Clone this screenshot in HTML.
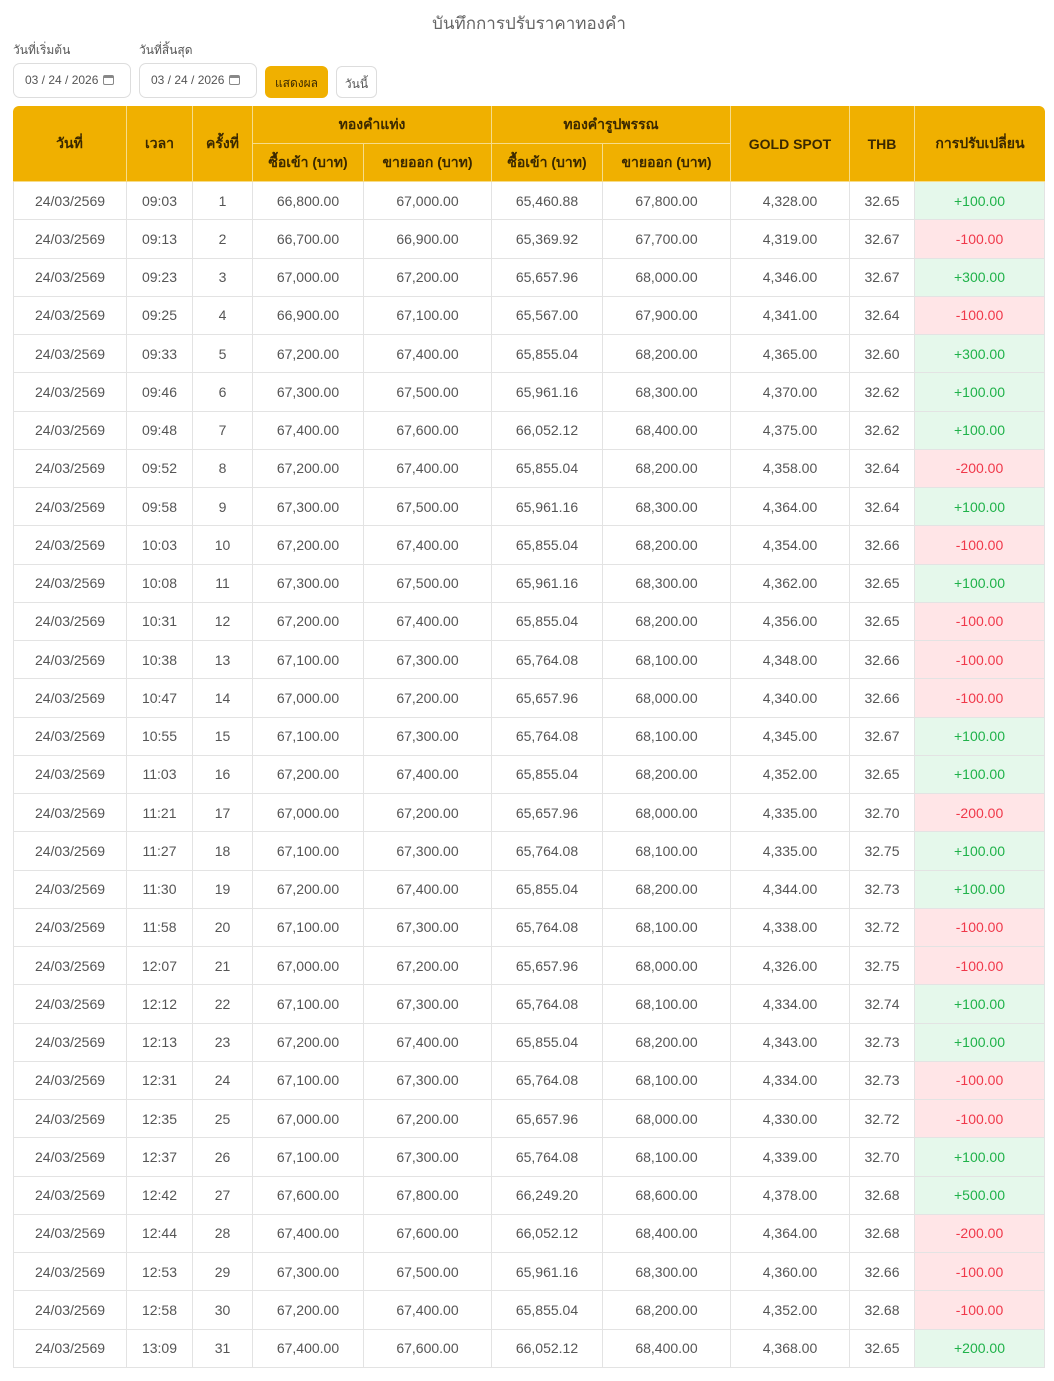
<!DOCTYPE html>
<html><head><meta charset="utf-8"><style>
*{box-sizing:border-box;margin:0;padding:0}
body{width:1054px;height:1381px;background:#fff;font-family:"Liberation Sans","Noto Sans CJK SC",sans-serif;color:#555;overflow:hidden;position:relative}
.title{position:absolute;top:10px;left:0;width:1058px;text-align:center;font-size:17px;color:#666}
.lbl{position:absolute;top:41px;font-size:12px;color:#555}
.inp{position:absolute;top:63px;height:35px;width:118px;border:1px solid #ddd;border-radius:7px;font-size:12px;color:#555;padding:9px 0 0 11px}
.cal{display:inline-block;width:11px;height:10px;border:1.5px solid #888;border-top-width:3px;border-radius:2px;margin-left:5px;vertical-align:-1px}
.btn{position:absolute;top:66px;height:32px;border-radius:6px;font-size:12px;padding-top:8px;text-align:center}
table{position:absolute;left:13px;top:106px;width:1032px;border-collapse:separate;border-spacing:0;font-size:14px}
th{background:#f0b000;color:#3a2800;font-weight:bold;border-right:1px solid #f6dc8a;border-bottom:1px solid #f6dc8a;font-size:14px}
th.r1{height:38px}th.r2{height:38px}
td{height:38.26px;text-align:center;border-right:1px solid #e3e3e3;border-bottom:1px solid #e3e3e3;color:#555}
td:first-child{border-left:1px solid #e3e3e3}
td:last-child{border-right:1px solid #e3e3e3}
.g{background:#e5f8eb;color:#1fb24a}.r{background:#ffe5e7;color:#f0384a}
</style></head><body>
<div class="title">บันทึกการปรับราคาทองคำ</div>
<div class="lbl" style="left:13px">วันที่เริ่มต้น</div>
<div class="lbl" style="left:139px">วันที่สิ้นสุด</div>
<div class="inp" style="left:13px">03 / 24 / 2026<span class="cal"></span></div>
<div class="inp" style="left:139px">03 / 24 / 2026<span class="cal"></span></div>
<div class="btn" style="left:265px;width:63px;background:#f0b000;color:#3a2800">แสดงผล</div>
<div class="btn" style="left:336px;width:41px;border:1px solid #ddd">วันนี้</div>
<table>
<colgroup><col style="width:114px"><col style="width:66px"><col style="width:60px"><col style="width:111px"><col style="width:128px"><col style="width:111px"><col style="width:128px"><col style="width:119px"><col style="width:65px"><col style="width:130px"></colgroup>
<tr><th rowspan="2" style="border-top-left-radius:6px">วันที่</th><th rowspan="2">เวลา</th><th rowspan="2">ครั้งที่</th><th colspan="2" class="r1">ทองคำแท่ง</th><th colspan="2">ทองคำรูปพรรณ</th><th rowspan="2">GOLD SPOT</th><th rowspan="2">THB</th><th rowspan="2" style="border-top-right-radius:6px;border-right:none">การปรับเปลี่ยน</th></tr>
<tr><th class="r2">ซื้อเข้า (บาท)</th><th>ขายออก (บาท)</th><th>ซื้อเข้า (บาท)</th><th>ขายออก (บาท)</th></tr>
<tbody id="b"></tbody>
</table>
<script>
var d=[["09:03","66,800.00","67,000.00","65,460.88","67,800.00","4,328.00","32.65","+100.00"],
["09:13","66,700.00","66,900.00","65,369.92","67,700.00","4,319.00","32.67","-100.00"],
["09:23","67,000.00","67,200.00","65,657.96","68,000.00","4,346.00","32.67","+300.00"],
["09:25","66,900.00","67,100.00","65,567.00","67,900.00","4,341.00","32.64","-100.00"],
["09:33","67,200.00","67,400.00","65,855.04","68,200.00","4,365.00","32.60","+300.00"],
["09:46","67,300.00","67,500.00","65,961.16","68,300.00","4,370.00","32.62","+100.00"],
["09:48","67,400.00","67,600.00","66,052.12","68,400.00","4,375.00","32.62","+100.00"],
["09:52","67,200.00","67,400.00","65,855.04","68,200.00","4,358.00","32.64","-200.00"],
["09:58","67,300.00","67,500.00","65,961.16","68,300.00","4,364.00","32.64","+100.00"],
["10:03","67,200.00","67,400.00","65,855.04","68,200.00","4,354.00","32.66","-100.00"],
["10:08","67,300.00","67,500.00","65,961.16","68,300.00","4,362.00","32.65","+100.00"],
["10:31","67,200.00","67,400.00","65,855.04","68,200.00","4,356.00","32.65","-100.00"],
["10:38","67,100.00","67,300.00","65,764.08","68,100.00","4,348.00","32.66","-100.00"],
["10:47","67,000.00","67,200.00","65,657.96","68,000.00","4,340.00","32.66","-100.00"],
["10:55","67,100.00","67,300.00","65,764.08","68,100.00","4,345.00","32.67","+100.00"],
["11:03","67,200.00","67,400.00","65,855.04","68,200.00","4,352.00","32.65","+100.00"],
["11:21","67,000.00","67,200.00","65,657.96","68,000.00","4,335.00","32.70","-200.00"],
["11:27","67,100.00","67,300.00","65,764.08","68,100.00","4,335.00","32.75","+100.00"],
["11:30","67,200.00","67,400.00","65,855.04","68,200.00","4,344.00","32.73","+100.00"],
["11:58","67,100.00","67,300.00","65,764.08","68,100.00","4,338.00","32.72","-100.00"],
["12:07","67,000.00","67,200.00","65,657.96","68,000.00","4,326.00","32.75","-100.00"],
["12:12","67,100.00","67,300.00","65,764.08","68,100.00","4,334.00","32.74","+100.00"],
["12:13","67,200.00","67,400.00","65,855.04","68,200.00","4,343.00","32.73","+100.00"],
["12:31","67,100.00","67,300.00","65,764.08","68,100.00","4,334.00","32.73","-100.00"],
["12:35","67,000.00","67,200.00","65,657.96","68,000.00","4,330.00","32.72","-100.00"],
["12:37","67,100.00","67,300.00","65,764.08","68,100.00","4,339.00","32.70","+100.00"],
["12:42","67,600.00","67,800.00","66,249.20","68,600.00","4,378.00","32.68","+500.00"],
["12:44","67,400.00","67,600.00","66,052.12","68,400.00","4,364.00","32.68","-200.00"],
["12:53","67,300.00","67,500.00","65,961.16","68,300.00","4,360.00","32.66","-100.00"],
["12:58","67,200.00","67,400.00","65,855.04","68,200.00","4,352.00","32.68","-100.00"],
["13:09","67,400.00","67,600.00","66,052.12","68,400.00","4,368.00","32.65","+200.00"]];
var h="";d.forEach(function(r,i){h+="<tr><td>24/03/2569</td><td>"+r[0]+"</td><td>"+(i+1)+"</td><td>"+r[1]+"</td><td>"+r[2]+"</td><td>"+r[3]+"</td><td>"+r[4]+"</td><td>"+r[5]+"</td><td>"+r[6]+"</td><td class='"+(r[7][0]=="+"?"g":"r")+"'>"+r[7]+"</td></tr>";});
document.getElementById("b").innerHTML=h;
</script>
</body></html>
